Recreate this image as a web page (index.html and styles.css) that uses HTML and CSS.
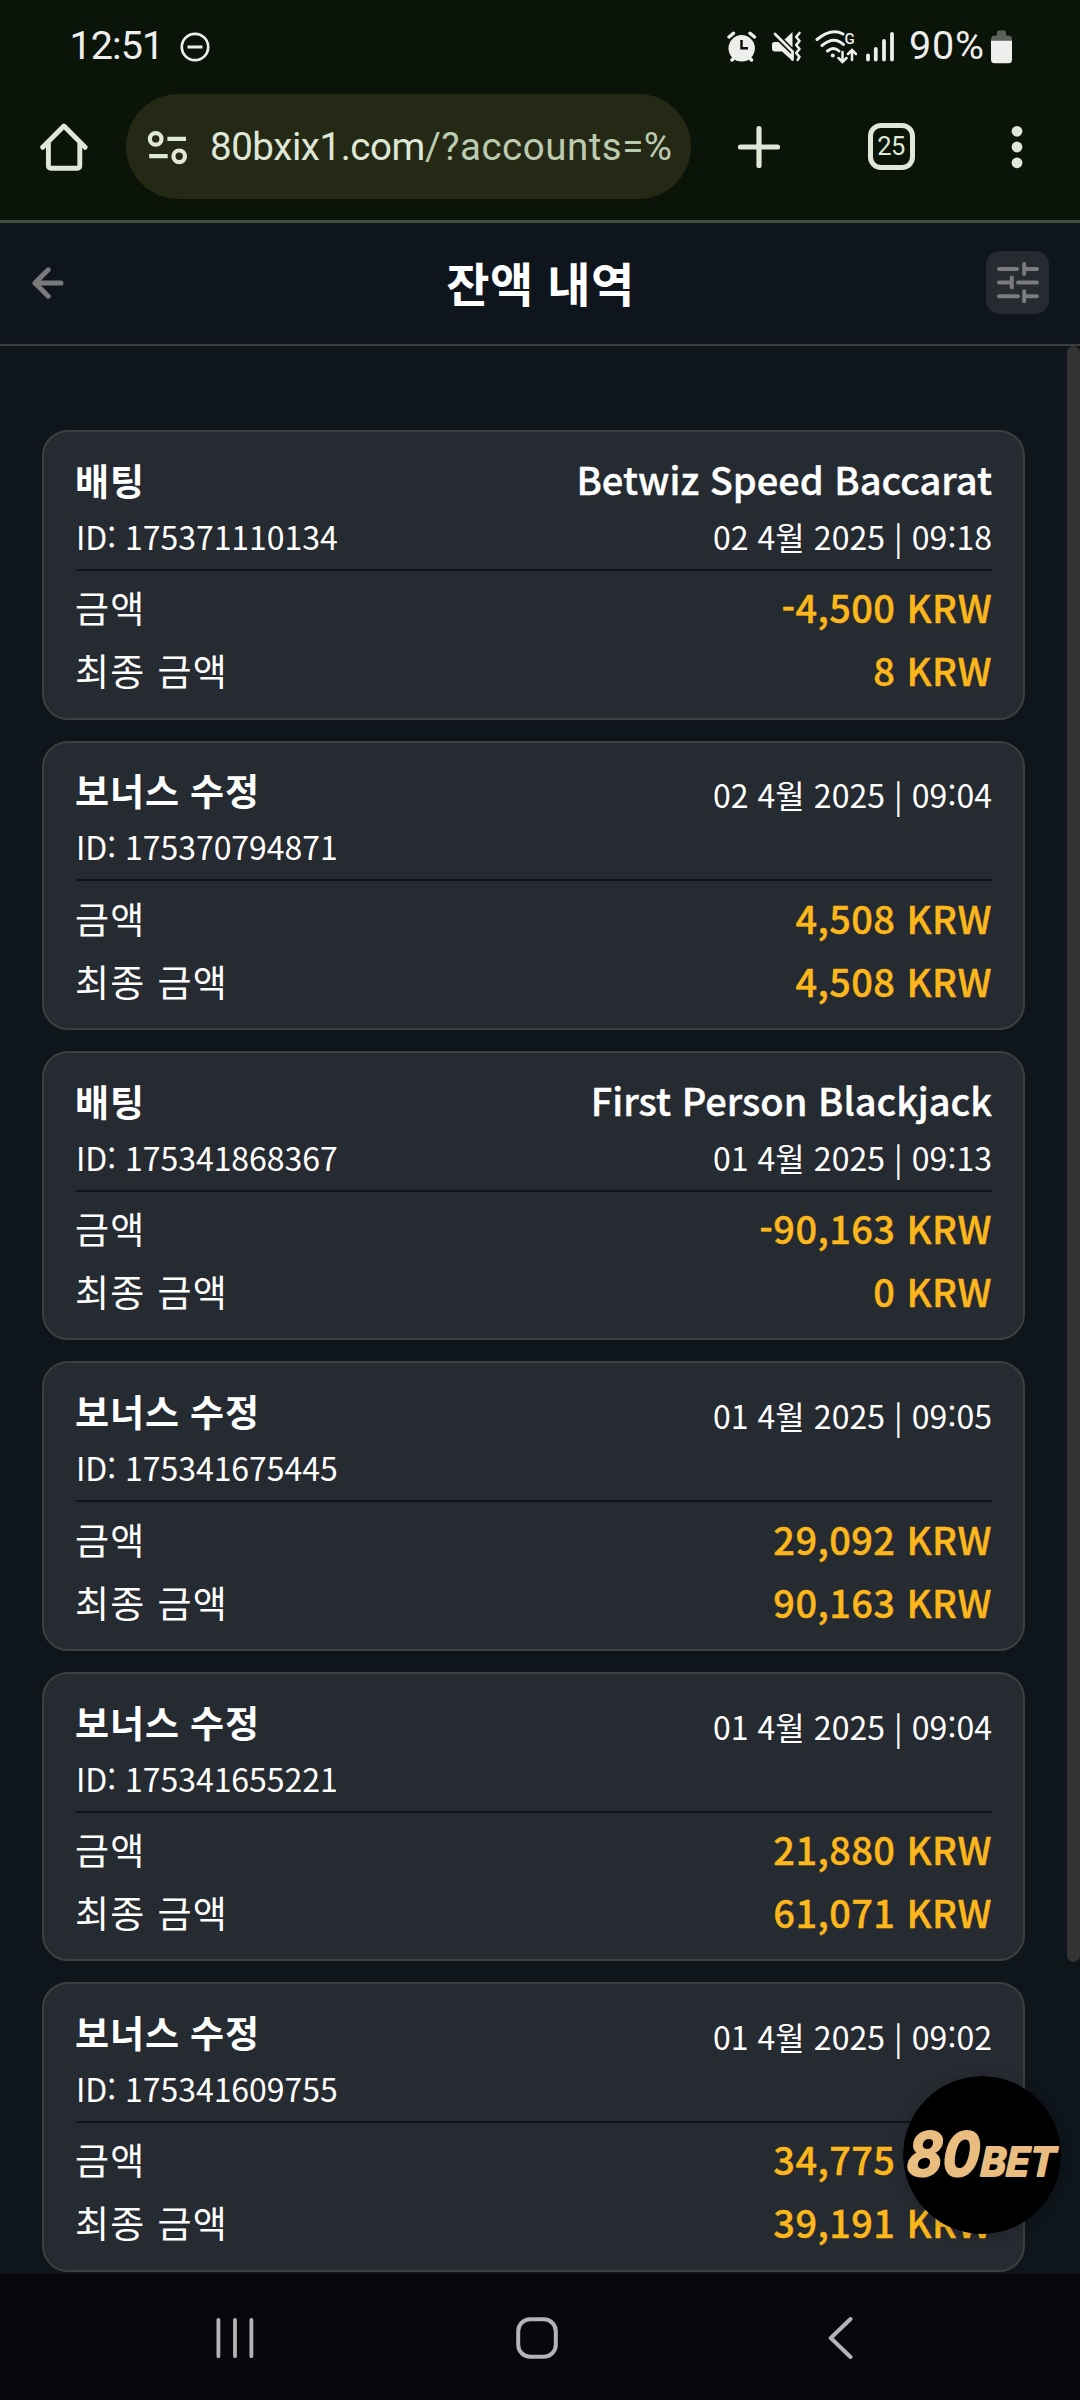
FILE: index.html
```html
<!DOCTYPE html>
<html lang="ko">
<head>
<meta charset="utf-8">
<title>잔액 내역</title>
<link rel="stylesheet" href="styles.css">
</head>
<body>
<div class="screen">
  <div class="status">
    <span class="clock">12:51</span>
    <svg class="dnd" width="30" height="30" viewBox="180 32 30 30"><circle cx="195" cy="47" r="13.2" fill="none" stroke="#eeeeec" stroke-width="2.7"/><path d="M187.5 47h15" stroke="#eeeeec" stroke-width="3"/></svg>
    <div class="indicators">
      <svg width="30" height="32" viewBox="727 30 30 32"><circle cx="741.7" cy="47.3" r="13.2" fill="#eeeeec"/><path d="M729 36l4.5-3.8M754.5 36l-4.5-3.8M732 59l3-3M751.500 59l-3-3" stroke="#eeeeec" stroke-width="3.4" stroke-linecap="round"/><path d="M741.500 39v8.300h6.500" fill="none" stroke="#0a1409" stroke-width="2.500"/></svg>
      <svg class="mute" width="31" height="32" viewBox="771 30 31 32"><path d="M772 43.500q0-2.500 2.500-2.500h4l14 13.500v5.500l-10.500-9.500h-7q-3 0-3-3z" fill="#eeeeec"/><path d="M784.500 38.500l8-7.500v15.500z" fill="#eeeeec"/><path d="M775 33l17.500 17.500v8" fill="none" stroke="#eeeeec" stroke-width="2.800" stroke-linecap="round"/><path d="M799.500 32l-3.300 4 3.300 4-3.300 4 3.300 4-3.300 4 3.300 3.800-1.800 3" fill="none" stroke="#eeeeec" stroke-width="2.600" stroke-linecap="round" stroke-linejoin="round"/></svg>
      <svg class="wifi" width="42" height="35" viewBox="815 28 42 35"><g fill="none" stroke="#eeeeec" stroke-width="3" stroke-linecap="round"><path d="M817 37.500q14.500-12 26-5.500"/><path d="M822 43.500q12-10 21.500-1"/><path d="M827.500 49q6-5 11.500 0"/></g><circle cx="832.800" cy="53.500" r="2" fill="#eeeeec"/><path d="M842.500 50v9.500M838.500 56l4 4 4-4M852 58v-9.500M848 52l4-4 4 4" fill="none" stroke="#eeeeec" stroke-width="2.500" stroke-linecap="round"/><text x="844.500" y="42" class="wifi-gen">G</text></svg>
      <svg class="signal" width="30" height="32" viewBox="865 30 30 32"><path d="M868 54.500V58.500M875.800 48V58.500M884 40V58.500M892 33V58.500" stroke="#eeeeec" stroke-width="3.800" stroke-linecap="round"/></svg>
      <span class="percent">90%</span>
      <svg class="battery" width="21" height="34" viewBox="991 28.500 21 34"><path d="M997 34v-3q0-2 2-2h5q2 0 2 2v3h2q4 0 4 4v4h-21v-4q0-4 4-4z" fill="#5b6359"/><path d="M991 39.300h21v19q0 3.500-3.500 3.500h-14q-3.500 0-3.500-3.500z" fill="#eeeeec"/></svg>
    </div>
  </div>

  <div class="toolbar">
    <svg class="home" width="48" height="50" viewBox="39.500 121.500 48 50"><path d="M42.200 146.800L63.400 125.600l21.200 21.200M47.900 142v23q0 2.700 2.700 2.700h26q2.700 0 2.700-2.700v-23" fill="none" stroke="#dfe7d6" stroke-width="4.900" stroke-linecap="round" stroke-linejoin="round"/></svg>
    <div class="omnibox">
      <svg width="42" height="36" viewBox="147 128 42 36"><g fill="none" stroke="#dfe7d6" stroke-width="4.200"><circle cx="155.700" cy="137.900" r="5.800"/><path d="M167.400 137.900H186M149.200 155.200H167.700"/><circle cx="179.200" cy="155.300" r="5.800"/></g></svg>
      <span class="url"><span class="host">80bxix1.com</span><span class="path">/?accounts=%</span></span>
    </div>
    <svg class="plus" width="44" height="44" viewBox="738 124.500 44 44"><path d="M741.500 146.500h37M760 128v37" stroke="#dfe7d6" stroke-width="5.200" stroke-linecap="round"/></svg>
    <div class="tabs">25</div>
    <svg class="more" width="12" height="44" viewBox="1011.300 124.500 12 44"><g fill="#dfe7d6"><circle cx="1017.300" cy="130.800" r="5.400"/><circle cx="1017.300" cy="146.500" r="5.400"/><circle cx="1017.300" cy="162.300" r="5.400"/></g></svg>
  </div>

  <header class="header">
    <svg class="back" width="32" height="32" viewBox="31.500 265.500 32 32"><path d="M34.500 281.500h26M47.700 268.300l-13.200 13.200 13.200 13.200" fill="none" stroke="#7a7a7a" stroke-width="5" stroke-linecap="round" stroke-linejoin="round"/></svg>
    <h1 class="title">잔액 내역</h1>
    <div class="filter"><svg width="44" height="44" viewBox="995 260.500 44 44"><path d="M998 268.400h18M1023.200 263.400v10M1023.200 268.400h12.700M998 282.100h12.700M1010.800 277v10M1017 282.100h19M998 295.700h19M1023.200 290.700v10M1023.200 295.700h12.700" fill="none" stroke="#7b7b7b" stroke-width="4" stroke-linecap="round"/></svg></div>
  </header>

  <main class="content">
    <div class="list">
      <article class="card">
        <div class="head">
          <div><div class="kind">배팅</div><div class="meta">ID: 175371110134</div></div>
          <div class="right"><div class="game">Betwiz Speed Baccarat</div><div class="meta date">02 4월 2025 | 09:18</div></div>
        </div>
        <div class="sums">
          <div class="row"><span class="label">금액</span><span class="amount">-4,500 KRW</span></div>
          <div class="row"><span class="label">최종 금액</span><span class="amount">8 KRW</span></div>
        </div>
      </article>
      <article class="card">
        <div class="head">
          <div><div class="kind">보너스 수정</div><div class="meta">ID: 175370794871</div></div>
          <div class="right"><div class="meta date alone">02 4월 2025 | 09:04</div></div>
        </div>
        <div class="sums">
          <div class="row"><span class="label">금액</span><span class="amount">4,508 KRW</span></div>
          <div class="row"><span class="label">최종 금액</span><span class="amount">4,508 KRW</span></div>
        </div>
      </article>
      <article class="card">
        <div class="head">
          <div><div class="kind">배팅</div><div class="meta">ID: 175341868367</div></div>
          <div class="right"><div class="game">First Person Blackjack</div><div class="meta date">01 4월 2025 | 09:13</div></div>
        </div>
        <div class="sums">
          <div class="row"><span class="label">금액</span><span class="amount">-90,163 KRW</span></div>
          <div class="row"><span class="label">최종 금액</span><span class="amount">0 KRW</span></div>
        </div>
      </article>
      <article class="card">
        <div class="head">
          <div><div class="kind">보너스 수정</div><div class="meta">ID: 175341675445</div></div>
          <div class="right"><div class="meta date alone">01 4월 2025 | 09:05</div></div>
        </div>
        <div class="sums">
          <div class="row"><span class="label">금액</span><span class="amount">29,092 KRW</span></div>
          <div class="row"><span class="label">최종 금액</span><span class="amount">90,163 KRW</span></div>
        </div>
      </article>
      <article class="card">
        <div class="head">
          <div><div class="kind">보너스 수정</div><div class="meta">ID: 175341655221</div></div>
          <div class="right"><div class="meta date alone">01 4월 2025 | 09:04</div></div>
        </div>
        <div class="sums">
          <div class="row"><span class="label">금액</span><span class="amount">21,880 KRW</span></div>
          <div class="row"><span class="label">최종 금액</span><span class="amount">61,071 KRW</span></div>
        </div>
      </article>
      <article class="card">
        <div class="head">
          <div><div class="kind">보너스 수정</div><div class="meta">ID: 175341609755</div></div>
          <div class="right"><div class="meta date alone">01 4월 2025 | 09:02</div></div>
        </div>
        <div class="sums">
          <div class="row"><span class="label">금액</span><span class="amount">34,775 KRW</span></div>
          <div class="row"><span class="label">최종 금액</span><span class="amount">39,191 KRW</span></div>
        </div>
      </article>
    </div>
    <div class="scrollbar"></div>
    <svg class="badge" width="158" height="158" viewBox="0 0 158 158"><circle cx="79" cy="79" r="79" fill="#000"/><g class="brand"><text transform="translate(3 100) skewX(-3)" font-size="61" textLength="73" lengthAdjust="spacingAndGlyphs">80</text><text transform="translate(77 100) skewX(-3)" font-size="40" textLength="75" lengthAdjust="spacingAndGlyphs">BET</text></g></svg>
  </main>

  <nav class="nav">
    <svg width="38" height="44" viewBox="216 2316 38 44"><path d="M218.400 2319.800v36.400M235 2319.800v36.400M251.400 2319.800v36.400" stroke="#b4b4b6" stroke-width="3.800" stroke-linecap="round"/></svg>
    <svg class="nav-home" width="42" height="44" viewBox="516 2316 42 44"><rect x="518.200" y="2319.200" width="37.600" height="37.600" rx="12" fill="none" stroke="#b4b4b6" stroke-width="4"/></svg>
    <svg width="26" height="44" viewBox="827 2316 26 44"><path d="M850.500 2319L830.800 2338l19.700 19" fill="none" stroke="#b4b4b6" stroke-width="4" stroke-linecap="round" stroke-linejoin="round"/></svg>
  </nav>
</div>
</body>
</html>
```
FILE: styles.css
```css
* { box-sizing: border-box; }
body { margin: 0; background: #0e151b; color: #fff; font-family: "Noto Sans CJK KR", sans-serif; }
svg { display: block; flex: none; }
.screen { width: 1080px; height: 2400px; display: flex; flex-direction: column; overflow: hidden; }

.status { height: 94px; background: #0a1409; display: flex; align-items: center; padding-left: 69.500px; padding-right: 68px; color: #eeeeec; font-family: Roboto, sans-serif; font-size: 39.5px; line-height: 94px; }
.clock { width: 110.500px; margin-top: -3px; letter-spacing: -0.900px; }
.indicators { display: flex; align-items: center; margin-left: auto; }
.mute { margin-left: 14px; }
.wifi { margin-left: 13px; }
.wifi-gen { font: 500 15px Roboto, sans-serif; fill: #eeeeec; }
.signal { margin-left: 8px; }
.percent { width: 82px; margin-left: 14px; margin-top: -3px; letter-spacing: 0.800px; white-space: nowrap; }

.toolbar { height: 129px; background: #0a1409; border-bottom: 3px solid #424d3b; padding: 0 56.700px 21px 39.500px; display: flex; align-items: center; }
.omnibox { width: 565px; height: 105px; border-radius: 53px; background: #252815; margin-left: 38.500px; padding-left: 21px; display: flex; align-items: center; }
.url { margin-left: 21px; font: 400 38.500px/105px Roboto, sans-serif; color: #dfe7d6; white-space: nowrap; }
.host { letter-spacing: -0.450px; }
.path { letter-spacing: 0.500px; color: #bccbb0; }
.plus { margin-left: 46px; }
.tabs { width: 47px; height: 47px; margin-left: 86.500px; border: 5px solid #dfe7d6; border-radius: 13px; color: #dfe7d6; font: 400 25.500px/37px Roboto, sans-serif; text-align: center; letter-spacing: -0.500px; }
.more { margin-left: auto; }

.header { height: 123px; border-bottom: 2px solid #3b3c3e; background: #0e151d; display: flex; align-items: center; justify-content: space-between; padding: 0 31px 2px 31.500px; }
.title { margin: -3px 0 0 31.500px; font-size: 47px; font-weight: 700; letter-spacing: 0.500px; line-height: 1; }
.filter { width: 63px; height: 63px; border-radius: 14px; background: #262a31; display: flex; align-items: center; justify-content: center; }

.content { position: relative; height: 1928px; overflow: hidden; }
.list { display: flex; flex-direction: column; gap: 21px; padding: 84.300px 55px 0 42px; }
.card { height: 289.400px; flex: none; border: 2px solid #3d3f42; border-radius: 26px; background: #262a31; padding: 18.700px 31px 0 32px; }
.head { display: flex; justify-content: space-between; height: 120px; border-bottom: 2px solid #0e151b; }
.right { text-align: right; }
.kind { font-size: 37px; font-weight: 700; height: 56px; line-height: 58px; letter-spacing: 1px; word-spacing: -1.500px; margin-left: -1px; }
.game { font-size: 38px; font-weight: 500; line-height: 56px; -webkit-text-stroke: 0.400px; }
.meta { font-size: 32px; line-height: 58.600px; letter-spacing: -0.050px; }
.date { letter-spacing: 0.050px; }
.alone { line-height: 66px; }
.sums { padding-top: 4.500px; }
.row { display: flex; justify-content: space-between; height: 63px; line-height: 63px; }
.label { font-size: 37px; line-height: 65px; letter-spacing: 1.200px; word-spacing: 0.500px; margin-left: -1px; }
.amount { font-size: 38px; font-weight: 500; letter-spacing: 0.400px; color: #fbb71b; -webkit-text-stroke: 0.400px; }

.scrollbar { position: absolute; right: 0; top: 0; width: 13px; height: 1616px; border-radius: 6.500px; background: #333; }
.badge { position: absolute; left: 903px; top: 1730px; border-radius: 50%; box-shadow: 0 2px 14px rgba(0, 0, 0, 0.150); }
.brand { font-family: Inter, sans-serif; font-weight: 700; font-style: italic; fill: #e9bd80; stroke: #e9bd80; stroke-width: 2px; stroke-linejoin: round; }

.nav { height: 126px; background: #07070c; display: flex; justify-content: space-between; align-items: center; padding: 1px 227px 0 216px; }
.nav-home { margin-right: 8px; }
```
